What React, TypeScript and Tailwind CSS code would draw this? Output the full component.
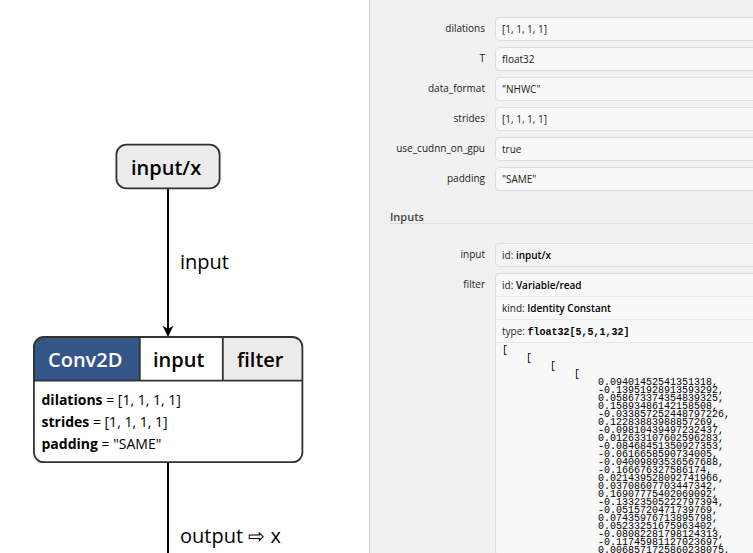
import React from "react";

const attributes = [
  { name: "dilations", value: "[1, 1, 1, 1]" },
  { name: "T", value: "float32" },
  { name: "data_format", value: '"NHWC"' },
  { name: "strides", value: "[1, 1, 1, 1]" },
  { name: "use_cudnn_on_gpu", value: "true" },
  { name: "padding", value: '"SAME"' },
];

const weights = [
  "0.09401452541351318",
  "-0.13951928913593292",
  "0.058673374354839325",
  "0.15893486142158508",
  "-0.033857252448797226",
  "0.12283883988857269",
  "-0.09810439497232437",
  "0.012633107602596283",
  "-0.08468451350927353",
  "-0.0616658590734005",
  "-0.04009893536567688",
  "-0.166676327586174",
  "0.021439528092741966",
  "0.03708607703447342",
  "0.16907775402069092",
  "-0.13323505222797394",
  "-0.0515720471739769",
  "0.07435976713895798",
  "0.05233251675963402",
  "-0.08082281798124313",
  "-0.11745981127023697",
  "0.0068571725860238075",
];

const tensor =
  ["[", "    [", "        [", "            ["].join("\n") +
  "\n" +
  weights.map((w) => " ".repeat(16) + w + ",").join("\n");

function Graph() {
  return (
    <main className="relative h-full w-[369px] shrink-0 overflow-hidden bg-white text-black">
      <div className="absolute left-[116px] top-[144px] h-[45px] w-[104px] rounded-[11px] bg-[#ececec] pl-[15px] pt-[10px] text-[20px] font-semibold leading-[27px]">
        input/x
      </div>
      <span className="absolute left-[180px] top-[248px] text-[20px] leading-7">input</span>
      <div className="absolute left-[34px] top-[337px] h-[125px] w-[268px] overflow-hidden rounded-[10px] bg-white">
        <div className="flex h-[44px] text-[20px] font-semibold leading-[45px]">
          <div className="w-[106px] bg-[#335588] pl-[14px] text-white">Conv2D</div>
          <div className="w-[83px] pl-[13px]">input</div>
          <div className="flex-1 bg-[#ececec] pl-[14px]">filter</div>
        </div>
        <div className="pl-[7.5px] pt-[8px] text-[14px] leading-[22px]">
          <p><b>dilations</b> = [1, 1, 1, 1]</p>
          <p><b>strides</b> = [1, 1, 1, 1]</p>
          <p><b>padding</b> = "SAME"</p>
        </div>
      </div>
      <svg className="absolute inset-0" width="369" height="553" fill="none">
        <path d="M168 189V331M168 463V553" stroke="#000" strokeWidth="2" />
        <path d="M162.5 325.5L168 337L173.5 325.5L168 329Z" fill="#000" />
        <g stroke="#333" strokeWidth="1.8">
          <rect x="116.4" y="144.6" width="103.2" height="43.8" rx="10" />
          <rect x="33.9" y="337" width="268.5" height="125.2" rx="10" />
          <path d="M34 380.6H302M139.8 337V380.6M222.8 337V380.6" />
        </g>
      </svg>
      <span className="absolute left-[180px] top-[522px] whitespace-nowrap text-[20px] leading-7">output ⇨ x</span>
    </main>
  );
}

function Row({ name, children }: { name: string; children: React.ReactNode }) {
  return (
    <div className="flex items-start">
      <div className="w-[115px] shrink-0 pt-[3px] text-right leading-4">{name}</div>
      <div className="ml-[10px] flex-1">{children}</div>
    </div>
  );
}

function Properties() {
  return (
    <aside className="h-full flex-1 overflow-hidden border-l border-[#ccc] bg-[#f1f1f1] text-[10px] text-[#222]">
      <div className="flex w-[404px] flex-col gap-[6px] pt-[17px]">
        {attributes.map((a) => (
          <Row key={a.name} name={a.name}>
            <div className="h-6 rounded border border-[#ddd] bg-[#f8f8f8] pl-[6px] pt-[3px] leading-4">{a.value}</div>
          </Row>
        ))}
      </div>
      <h2 className="ml-5 mt-[17px] h-4 w-[384px] border-b border-[#ddd] text-[11px] font-semibold leading-[18px] text-[#444]">Inputs</h2>
      <div className="flex w-[404px] flex-col gap-[6px] pt-[19px]">
        <Row name="input">
          <div className="h-6 rounded border border-[#ddd] bg-[#f4f4f4] pl-[6px] pt-[3px] leading-4">
            id: <b className="font-semibold text-black">input/x</b>
          </div>
        </Row>
        <Row name="filter">
          <div className="rounded border border-[#ddd] bg-[#f8f8f8]">
            <div className="h-[23px] border-b border-[#e8e8e8] pl-[6px] pt-[3px] leading-4">
              id: <b className="font-semibold text-black">Variable/read</b>
            </div>
            <div className="h-[23px] border-b border-[#e8e8e8] pl-[6px] pt-[3px] leading-4">
              kind: <b className="font-semibold text-black">Identity Constant</b>
            </div>
            <div className="h-[23px] border-b border-[#e8e8e8] pl-[6px] pt-[3px] leading-4">
              type: <b className="font-['Liberation_Mono',monospace] text-[10px] text-black">float32[5,5,1,32]</b>
            </div>
            <pre className="pl-[6px] pt-[4px] font-['Liberation_Mono',monospace] text-[10px] leading-[8px] text-black">{tensor}</pre>
          </div>
        </Row>
      </div>
    </aside>
  );
}

export default function App() {
  return (
    <div className="flex h-[553px] w-[753px] overflow-hidden font-['Open_Sans',sans-serif]">
      <Graph />
      <Properties />
    </div>
  );
}
